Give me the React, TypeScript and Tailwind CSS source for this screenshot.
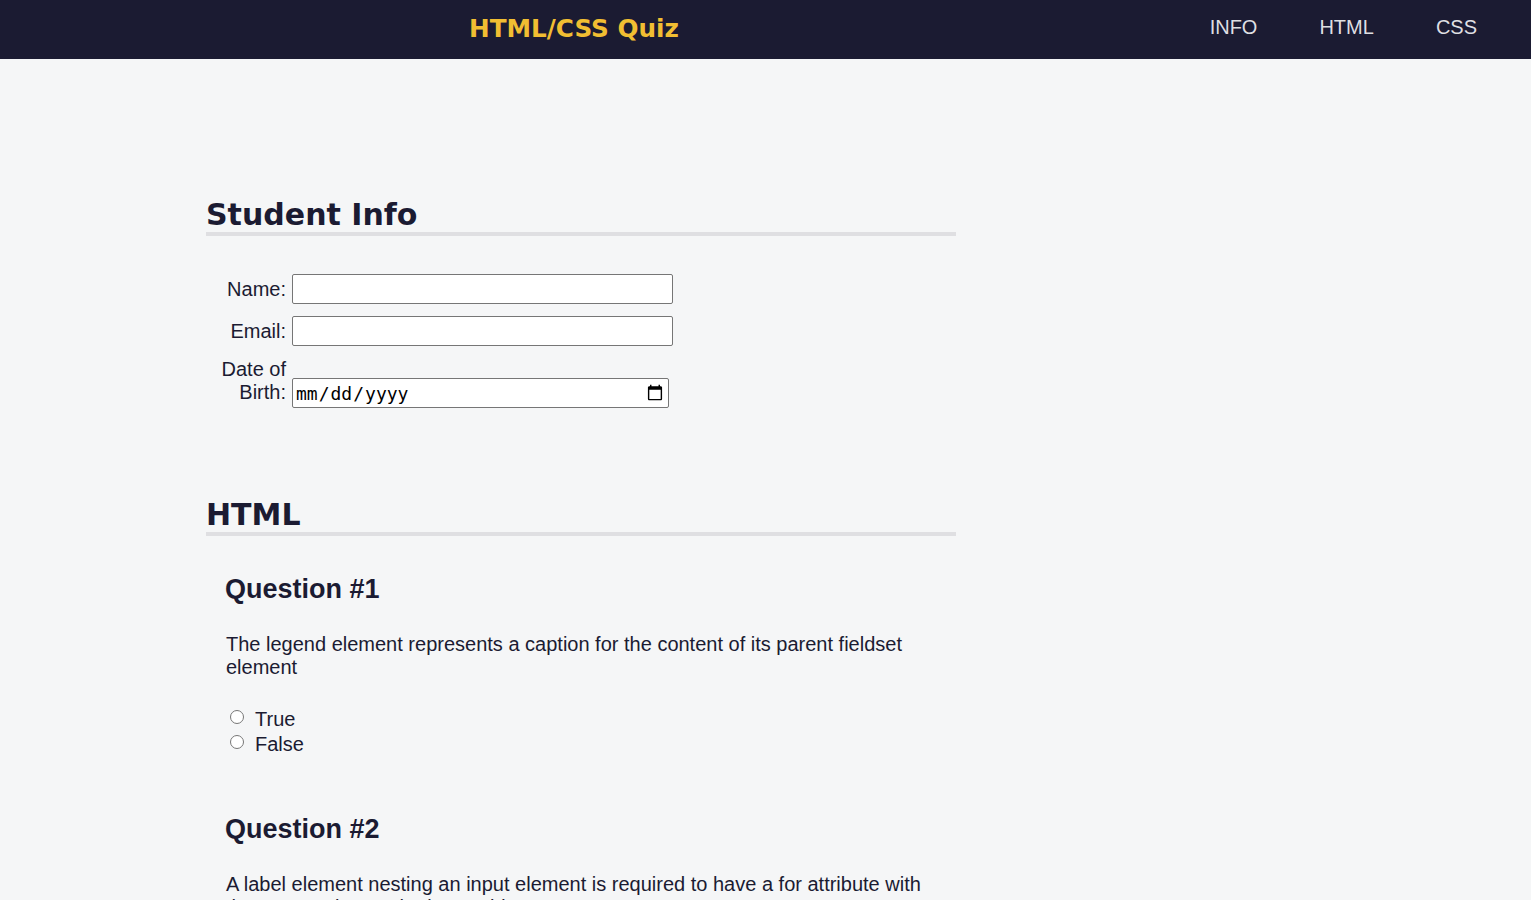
export default function App() {
  const questions = [
    {
      n: 1,
      text: "The legend element represents a caption for the content of its parent fieldset element",
    },
    {
      n: 2,
      text: "A label element nesting an input element is required to have a for attribute with the same value as the input's id",
    },
  ]

  return (
    <div className="min-h-screen bg-[#f5f6f7] text-[#1b1b32] font-['Liberation_Sans',Arial,sans-serif]">
      <header className="h-[59px] bg-[#1b1b32] flex items-center justify-between">
        <h1 className="ml-[469px] pb-[3px] text-[24.7px] leading-[29px] font-bold text-[#f1be32] font-['DejaVu_Sans',Verdana,sans-serif]">
          HTML/CSS Quiz
        </h1>
        <nav className="pr-[54px] pb-[5px]">
          <ul className="flex gap-[62px] text-[20px] leading-[23px] text-[#dfdfe2]">
            <li>INFO</li>
            <li>HTML</li>
            <li>CSS</li>
          </ul>
        </nav>
      </header>

      <main className="ml-[206px] w-[750px]">
        <section className="pt-[139px]">
          <h2 className="text-[30px] leading-[34px] font-bold font-['DejaVu_Sans',Verdana,sans-serif] border-b-4 border-[#dfdfe2]">
            Student Info
          </h2>
          <div className="pl-[5px] mt-[38px] flex flex-col gap-[12px] text-[20px] leading-[23px]">
            <div className="flex items-end">
              <label className="w-[75px] text-right pb-[3px]">Name:</label>
              <input type="text" className="ml-[6px] w-[381px] h-[30px] bg-white border border-[#767676] rounded-[2px]" />
            </div>
            <div className="flex items-end">
              <label className="w-[75px] text-right pb-[3px]">Email:</label>
              <input type="email" className="ml-[6px] w-[381px] h-[30px] bg-white border border-[#767676] rounded-[2px]" />
            </div>
            <div className="flex items-end">
              <label className="w-[75px] text-right pb-[4px]">Date of Birth:</label>
              <input
                type="date"
                className="ml-[6px] w-[377px] h-[30px] px-[2px] bg-white border border-[#767676] rounded-[2px] text-[18px] text-black font-['DejaVu_Sans_Mono',monospace]"
              />
            </div>
          </div>
        </section>

        <section className="pt-[90px]">
          <h2 className="text-[30px] leading-[34px] font-bold font-['DejaVu_Sans',Verdana,sans-serif] border-b-4 border-[#dfdfe2]">
            HTML
          </h2>
          {questions.map((q) => (
            <div key={q.n} className="pl-[19px] pt-[38px] pb-[19px]">
              <h3 className="text-[27px] leading-[31px] font-bold">Question #{q.n}</h3>
              <p className="mt-[28px] w-[710px] pl-[1px] text-[20px] leading-[23px]">{q.text}</p>
              <ul className="mt-[28px] text-[20px] leading-[25px]">
                {["True", "False"].map((a) => (
                  <li key={a} className="flex items-center">
                    <input type="radio" name={`q${q.n}`} className="ml-[5px] mr-[11px] mb-[6px] w-[14px] h-[14px]" />
                    <span>{a}</span>
                  </li>
                ))}
              </ul>
            </div>
          ))}
        </section>
      </main>
    </div>
  )
}
